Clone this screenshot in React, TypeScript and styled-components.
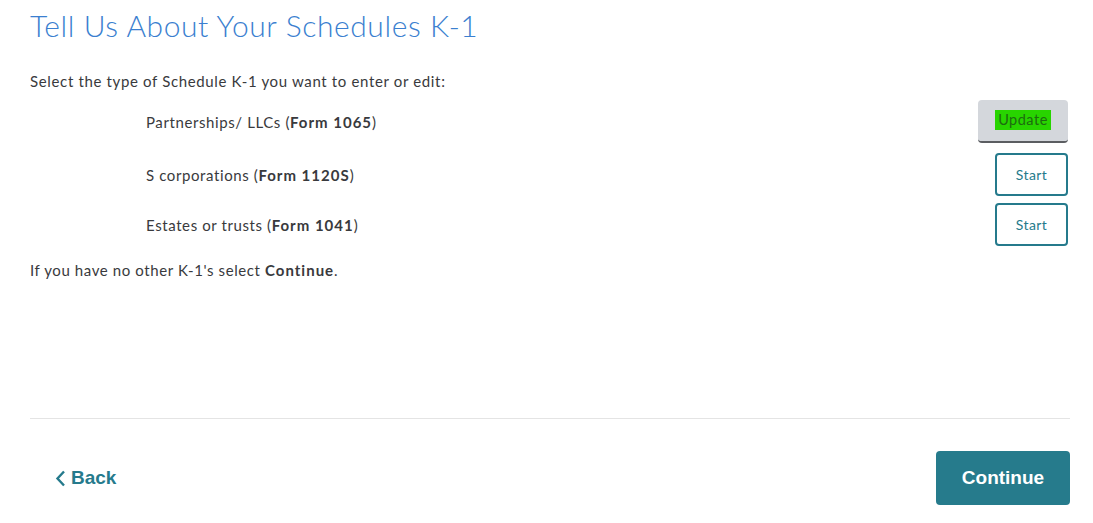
import React from "react";
import styled, { createGlobalStyle } from "styled-components";

const GlobalStyle = createGlobalStyle`
	html, body {
		margin: 0;
		padding: 0;
		background: #ffffff;
	}
	body {
		font-family: Lato, "Noto Sans", sans-serif;
		color: #393a3d;
	}
`;

const Page = styled.div`
	width: 1040px;
	padding: 0 23px 0 30px;
	display: flex;
	flex-direction: column;
`;

const Title = styled.h1`
	margin: 5px 0 0 0;
	font-size: 30px;
	line-height: 40px;
	font-weight: 300;
	color: #3b7fd0;
	letter-spacing: 0.6px;
`;

const Intro = styled.p`
	margin: 25px 0 0 0;
	font-size: 15px;
	line-height: 22px;
	letter-spacing: 0.65px;
`;

const Options = styled.div`
	display: flex;
	flex-direction: column;
	margin-top: 8px;
	padding: 0 2px 0 116px;
`;

const Row = styled.div<{ $gap: number }>`
	display: flex;
	align-items: center;
	justify-content: space-between;
	height: 43px;
	margin-bottom: ${(p) => p.$gap}px;
	font-size: 15px;
	letter-spacing: 0.6px;
`;

const Bold = styled.b`
	font-weight: 700;
	letter-spacing: 1px;
`;

const UpdateButton = styled.button`
	width: 90px;
	height: 43px;
	box-sizing: border-box;
	border: none;
	border-bottom: 2px solid #5b5d61;
	border-radius: 4px;
	background: #d4d7dc;
	display: flex;
	align-items: center;
	justify-content: center;
	padding: 0 0 2px 0;
	font-family: inherit;
	font-size: 14.5px;
	letter-spacing: 0.5px;
	color: #1d6b10;
`;

const Highlight = styled.span`
	background: #28d400;
	padding: 1px 3px;
	line-height: 18px;
`;

const StartButton = styled.button`
	width: 73px;
	height: 43px;
	box-sizing: border-box;
	border: 2px solid #257a8c;
	border-radius: 4px;
	background: #ffffff;
	font-family: inherit;
	font-size: 14px;
	letter-spacing: 0.4px;
	color: #257a8c;
`;

const Closing = styled.p`
	margin: 13px 0 0 0;
	font-size: 15px;
	line-height: 22px;
	letter-spacing: 0.6px;
`;

const Divider = styled.hr`
	margin: 137px 0 0 0;
	border: none;
	border-top: 1px solid #e4e4e4;
	height: 0;
`;

const Footer = styled.div`
	display: flex;
	align-items: center;
	justify-content: space-between;
	margin-top: 32px;
	padding-left: 25px;
`;

const BackLink = styled.a`
	display: flex;
	align-items: center;
	gap: 5px;
	font-family: "Liberation Sans", Arial, sans-serif;
	font-weight: 700;
	font-size: 19px;
	color: #257a8c;
	cursor: pointer;
`;

const ContinueButton = styled.button`
	width: 134px;
	height: 54px;
	border: none;
	border-radius: 4px;
	background: #267b8c;
	color: #ffffff;
	font-family: "Liberation Sans", Arial, sans-serif;
	font-weight: 700;
	font-size: 19px;
`;

const options = [
	{ label: "Partnerships/ LLCs", form: "Form 1065", started: true, gap: 10 },
	{ label: "S corporations", form: "Form 1120S", started: false, gap: 7 },
	{ label: "Estates or trusts", form: "Form 1041", started: false, gap: 0 },
];

export default function App() {
	return (
		<>
			<GlobalStyle />
			<Page>
				<Title>Tell Us About Your Schedules K-1</Title>
				<Intro>Select the type of Schedule K-1 you want to enter or edit:</Intro>
				<Options>
					{options.map((o) => (
						<Row key={o.form} $gap={o.gap}>
							<span>
								{o.label} (<Bold>{o.form}</Bold>)
							</span>
							{o.started ? (
								<UpdateButton>
									<Highlight>Update</Highlight>
								</UpdateButton>
							) : (
								<StartButton>Start</StartButton>
							)}
						</Row>
					))}
				</Options>
				<Closing>
					If you have no other K-1's select <Bold>Continue</Bold>.
				</Closing>
				<Divider />
				<Footer>
					<BackLink>
						<svg width="11" height="17" viewBox="0 0 11 17">
							<path d="M9 1.5 L2.5 8.5 L9 15.5" fill="none" stroke="#257a8c" strokeWidth="2.4" />
						</svg>
						Back
					</BackLink>
					<ContinueButton>Continue</ContinueButton>
				</Footer>
			</Page>
		</>
	);
}
